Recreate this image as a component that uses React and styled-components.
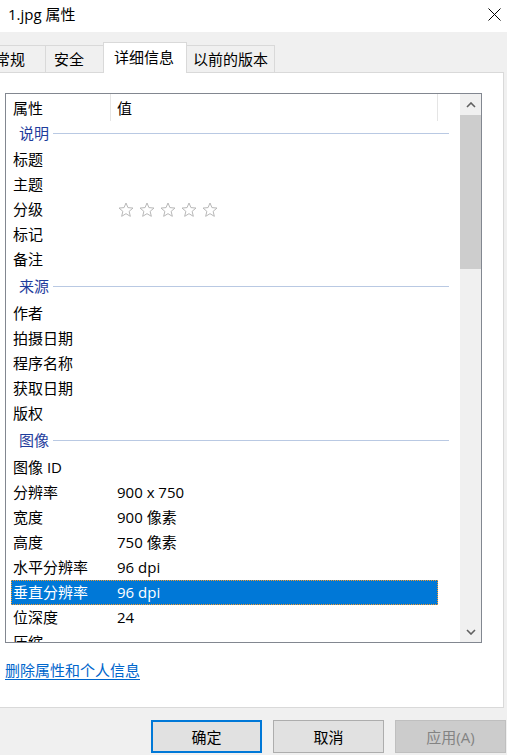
import React from "react";
import styled, { createGlobalStyle } from "styled-components";

const GlobalStyle = createGlobalStyle`
  *, *::before, *::after { box-sizing: border-box; }
  html, body { margin: 0; padding: 0; background: #f0f0f0; }
  body {
    font-family: "Open Sans", "Noto Sans CJK SC", sans-serif;
    font-size: 15px;
    color: #000;
  }
`;

const Window = styled.div`
  width: 507px;
  height: 755px;
  overflow: hidden;
  background: #f0f0f0;
  display: flex;
  flex-direction: column;
`;

const TitleBar = styled.div`
  height: 32px;
  flex: none;
  background: #fff;
  display: flex;
  align-items: center;
  justify-content: space-between;
  padding-left: 8px;
`;

const Title = styled.div`
  line-height: 20px;
  padding-bottom: 4px;
`;

const CloseBtn = styled.div`
  width: 26px;
  height: 32px;
  display: flex;
  align-items: center;
  justify-content: center;
  padding-bottom: 4px;
`;

const TabStrip = styled.div`
  height: 41px;
  flex: none;
  display: flex;
  align-items: flex-end;
  margin-left: -14px;
`;

const Tab = styled.div`
  width: ${(p) => p.$w}px;
  height: ${(p) => (p.$active ? 31 : 27)}px;
  margin-bottom: ${(p) => (p.$active ? 0 : 1)}px;
  margin-left: ${(p) => (p.$first ? 0 : -1)}px;
  padding-left: ${(p) => p.$pad}px;
  padding-bottom: ${(p) => (p.$active ? 3 : 0)}px;
  border: 1px solid #d9d9d9;
  border-bottom: none;
  background: ${(p) => (p.$active ? "#fff" : "#f0f0f0")};
  position: relative;
  z-index: ${(p) => (p.$active ? 2 : 1)};
  display: flex;
  align-items: center;
  white-space: nowrap;
  line-height: 20px;
`;

const Panel = styled.div`
  height: 636px;
  flex: none;
  margin: -1px 3px 0 -1px;
  background: #fff;
  border: 1px solid #d9d9d9;
  padding: 20px 0 0 5px;
  display: flex;
  flex-direction: column;
  align-items: flex-start;
`;

const List = styled.div`
  width: 477px;
  height: 550px;
  flex: none;
  border: 1px solid #828790;
  display: flex;
`;

const Main = styled.div`
  width: 454px;
  display: flex;
  flex-direction: column;
`;

const Header = styled.div`
  height: 27px;
  flex: none;
  display: flex;
`;

const HeaderCell = styled.div`
  width: ${(p) => p.$w}px;
  height: 27px;
  padding-left: ${(p) => p.$pad}px;
  border-right: 1px solid #e5e5e5;
  display: flex;
  align-items: center;
  line-height: 20px;
`;

const Body = styled.div`
  flex: 1;
  overflow: hidden;
  padding-left: 5px;
`;

const Group = styled.div`
  width: 438px;
  height: ${(p) => p.$h}px;
  display: flex;
  align-items: center;
  gap: 4px;
  padding-left: 8px;
  padding-bottom: 2px;
  color: #1e3c9c;
  line-height: 20px;
`;

const GroupLine = styled.div`
  flex: 1;
  height: 1px;
  margin-top: 1px;
  background: #b9c9e3;
`;

const Row = styled.div`
  width: 427px;
  height: 25px;
  padding-bottom: 2px;
  display: grid;
  grid-template-columns: 106px 1fr;
  align-items: center;
  line-height: 20px;
  white-space: nowrap;
  background: ${(p) => (p.$selected ? "#0078d7" : "transparent")};
  color: ${(p) => (p.$selected ? "#fff" : "#000")};
  outline: ${(p) => (p.$selected ? "1px dotted #f59a2c" : "none")};
  outline-offset: -1px;
`;

const Label = styled.div`
  padding-left: 2px;
`;

const Value = styled.div`
  display: flex;
  align-items: center;
`;

const Stars = styled.div`
  display: flex;
  gap: 5px;
  padding-left: 1px;
  padding-top: 2px;
`;

const Scrollbar = styled.div`
  width: 21px;
  background: #f0f0f0;
  display: flex;
  flex-direction: column;
`;

const ScrollBtn = styled.div`
  height: 21px;
  flex: none;
  display: flex;
  align-items: center;
  justify-content: center;
`;

const Thumb = styled.div`
  height: 154px;
  flex: none;
  background: #cdcdcd;
`;

const Spacer = styled.div`
  flex: 1;
`;

const Link = styled.a`
  margin-top: 17px;
  line-height: 20px;
  color: #0066cc;
  text-decoration: underline;
  text-underline-offset: 3px;
  cursor: pointer;
`;

const Footer = styled.div`
  display: flex;
  justify-content: flex-end;
  gap: 11px;
  margin-top: 12px;
  padding-right: 1px;
`;

const Button = styled.div`
  width: 111px;
  height: 33px;
  display: flex;
  align-items: center;
  justify-content: center;
  line-height: 20px;
  background: ${(p) => (p.$disabled ? "#cccccc" : "#e1e1e1")};
  color: ${(p) => (p.$disabled ? "#838383" : "#000")};
  border: ${(p) =>
    p.$primary ? "2px solid #0078d7" : p.$disabled ? "1px solid #bfbfbf" : "1px solid #adadad"};
`;

const Star = () => (
  <svg width="16" height="16" viewBox="0 0 24 24">
    <polygon
      points="12,1.5 14.9,8.4 22.5,9.1 16.7,14 18.5,21.5 12,17.5 5.5,21.5 7.3,14 1.5,9.1 9.1,8.4"
      fill="none"
      stroke="#b8b8b8"
      strokeWidth="1.5"
      strokeLinejoin="miter"
    />
  </svg>
);

const Chevron = ({ down }) => (
  <svg width="10" height="6" viewBox="0 0 10 6">
    <polyline
      points={down ? "1,1 5,5 9,1" : "1,5 5,1 9,5"}
      fill="none"
      stroke="#606060"
      strokeWidth="1.6"
    />
  </svg>
);

const tabs = [
  { t: "常规", w: 60, pad: 8 },
  { t: "安全", w: 59, pad: 8 },
  { t: "详细信息", w: 84, pad: 10, active: true },
  { t: "以前的版本", w: 89, pad: 6 },
];

const sections = [
  {
    name: "说明",
    h: 26,
    rows: [["标题"], ["主题"], ["分级", "stars"], ["标记"], ["备注"]],
  },
  {
    name: "来源",
    h: 29,
    rows: [["作者"], ["拍摄日期"], ["程序名称"], ["获取日期"], ["版权"]],
  },
  {
    name: "图像",
    h: 29,
    rows: [
      ["图像 ID"],
      ["分辨率", "900 x 750"],
      ["宽度", "900 像素"],
      ["高度", "750 像素"],
      ["水平分辨率", "96 dpi"],
      ["垂直分辨率", "96 dpi", true],
      ["位深度", "24"],
      ["压缩"],
    ],
  },
];

export default function App() {
  return (
    <>
      <GlobalStyle />
      <Window>
        <TitleBar>
          <Title>1.jpg 属性</Title>
          <CloseBtn>
            <svg width="13" height="13" viewBox="0 0 13 13">
              <path d="M0.5 0.5 L12.5 12.5 M12.5 0.5 L0.5 12.5" stroke="#000" strokeWidth="1" />
            </svg>
          </CloseBtn>
        </TitleBar>
        <TabStrip>
          {tabs.map((tb, i) => (
            <Tab key={tb.t} $w={tb.w} $pad={tb.pad} $active={tb.active} $first={i === 0}>
              {tb.t}
            </Tab>
          ))}
        </TabStrip>
        <Panel>
          <List>
            <Main>
              <Header>
                <HeaderCell $w={105} $pad={7}>属性</HeaderCell>
                <HeaderCell $w={327} $pad={6}>值</HeaderCell>
              </Header>
              <Body>
                {sections.map((s) => (
                  <React.Fragment key={s.name}>
                    <Group $h={s.h}>
                      {s.name}
                      <GroupLine />
                    </Group>
                    {s.rows.map(([label, value, selected]) => (
                      <Row key={label} $selected={selected}>
                        <Label>{label}</Label>
                        <Value>
                          {value === "stars" ? (
                            <Stars>
                              {[0, 1, 2, 3, 4].map((k) => (
                                <Star key={k} />
                              ))}
                            </Stars>
                          ) : (
                            value
                          )}
                        </Value>
                      </Row>
                    ))}
                  </React.Fragment>
                ))}
              </Body>
            </Main>
            <Scrollbar>
              <ScrollBtn>
                <Chevron />
              </ScrollBtn>
              <Thumb />
              <Spacer />
              <ScrollBtn>
                <Chevron down />
              </ScrollBtn>
            </Scrollbar>
          </List>
          <Link>删除属性和个人信息</Link>
        </Panel>
        <Footer>
          <Button $primary>确定</Button>
          <Button>取消</Button>
          <Button $disabled>应用(A)</Button>
        </Footer>
      </Window>
    </>
  );
}
